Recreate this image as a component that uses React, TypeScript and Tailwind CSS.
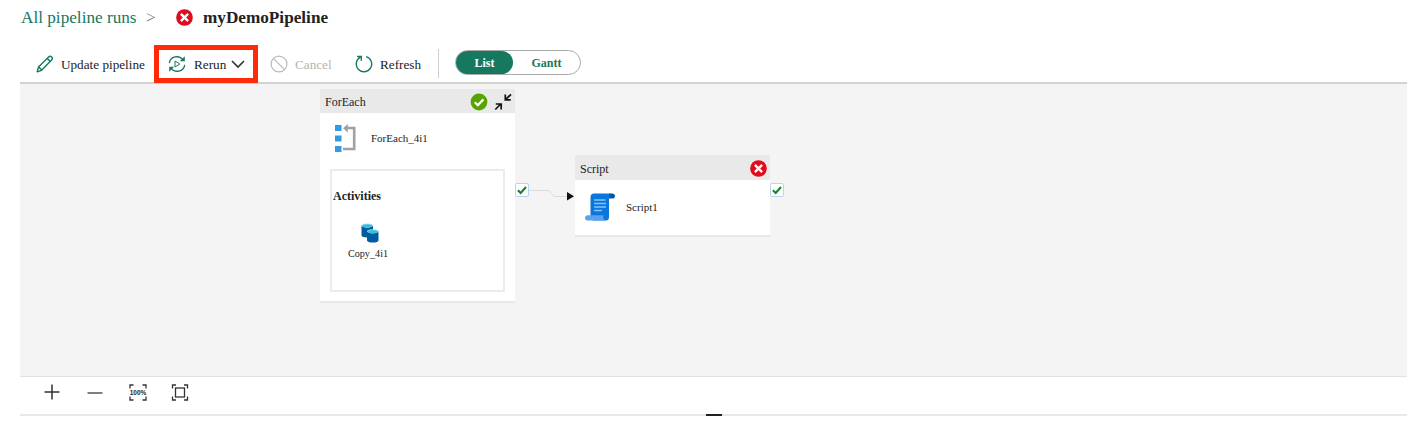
import React from "react";

function ErrorBadge({ className }: { className: string }) {
  return (
    <svg viewBox="0 0 18 18" className={className}>
      <circle cx="9" cy="9" r="8.8" fill="#e00b1c" />
      <path d="M5.2 5.2l7.6 7.6M12.8 5.2l-7.6 7.6" stroke="#fff" strokeWidth="2.5" />
    </svg>
  );
}

function SuccessBadge() {
  return (
    <svg viewBox="0 0 18 18" className="h-[18px] w-[18px] shrink-0">
      <circle cx="9" cy="9" r="8.4" fill="#57a300" />
      <path d="M4.8 9.2l3 3 5.6-5.8" fill="none" stroke="#fff" strokeWidth="2.3" />
    </svg>
  );
}

function PencilIcon() {
  return (
    <svg viewBox="0 0 18 18" className="h-[18px] w-[18px] shrink-0" fill="none" stroke="#16785f" strokeWidth="1.4" strokeLinejoin="round">
      <path d="M1.2 16.8l1.3-4.700L12.600 2c1-1 2.200-1 3.100-.1.9.9.9 2.100-.1 3.100L5.600 15.300z" />
      <path d="M11.300 3.500l3 3M2.700 12l3 3" />
    </svg>
  );
}

function RerunIcon() {
  return (
    <svg viewBox="0 0 18 18" className="h-[18px] w-[18px] shrink-0" fill="none" stroke="#16785f" strokeWidth="1.3">
      <path d="M1.3 8.2A7.5 7.500 0 0 1 15 5.200M16.700 9.800A7.500 7.500 0 0 1 3 12.800" />
      <path d="M16.800 1.200v5h-5zM1.200 16.800v-5h5z" fill="#16785f" stroke="none" />
      <path d="M7 6v6l4.800-3z" strokeWidth="1" />
    </svg>
  );
}

function CancelIcon() {
  return (
    <svg viewBox="0 0 18 18" className="h-[18px] w-[18px] shrink-0" fill="none" stroke="#bcbcbc" strokeWidth="1.3">
      <circle cx="9" cy="9" r="7.900" />
      <path d="M3.400 3.400l11.200 11.200" />
    </svg>
  );
}

function RefreshIcon() {
  return (
    <svg viewBox="0 0 18 18" className="h-[18px] w-[18px] shrink-0" fill="none" stroke="#16785f" strokeWidth="1.4">
      <path d="M11.200 1.700A7.700 7.700 0 1 1 5.500 2.200" />
      <path d="M2 1.500h4.300v4.300" />
    </svg>
  );
}

function CollapseIcon() {
  return (
    <svg viewBox="0 0 18 18" className="h-[18px] w-[18px] shrink-0" fill="none" stroke="#111" strokeWidth="1.700">
      <path d="M17 1.300L12 6.200M11.300 1.500v5.400h5.400M1.300 16.500l5-5M1.800 11h5.400v5.400" />
    </svg>
  );
}

function LoopIcon() {
  return (
    <svg viewBox="0 0 21 29" className="h-[29px] w-[21px] shrink-0">
      <path d="M0 1h6.500v6H0zM0 11.500h6.500v6H0zM0 22h6.500v6H0z" fill="#3399e5" />
      <path d="M12 4h7.200v21H8" fill="none" stroke="#a0a0a0" strokeWidth="2.600" />
      <path d="M8 4.200L12.800 0v8.400z" fill="#a0a0a0" />
    </svg>
  );
}

function CopyIcon() {
  return (
    <svg viewBox="0 0 18 20" className="h-5 w-[18px]">
      <path d="M.5 2.500v10c0 1 2.500 2 6 2s5.500-1 5.500-2v-10z" fill="#005ba1" />
      <ellipse cx="6.250" cy="2.600" rx="5.750" ry="2.100" fill="#b5dcec" />
      <ellipse cx="6.250" cy="2.700" rx="4.800" ry="1.500" fill="#32bedd" />
      <path d="M6 8.300v9.200c0 1.200 2.500 2.100 5.800 2.100s5.700-.9 5.700-2.100V8.300z" fill="#005ba1" />
      <ellipse cx="11.750" cy="8.300" rx="5.750" ry="2.100" fill="#b5dcec" />
      <ellipse cx="11.750" cy="8.400" rx="4.800" ry="1.500" fill="#32bedd" />
    </svg>
  );
}

function ScriptIcon() {
  return (
    <svg viewBox="0 0 30 28" className="h-7 w-[30px] shrink-0">
      <path d="M24 .4h3.300c1.500 0 2.700 1.100 2.700 2.600 0 1.400-1 2.600-2.400 2.600H24z" fill="#0058a3" />
      <path d="M9 .4h17c-1.500.6-2 1.700-2 3.300V24c0 2.300-1.100 3.600-3 3.600H8L5.500 23V4c0-2.200 1.300-3.600 3.500-3.600z" fill="#0a75da" />
      <path d="M2.800 22.200h15.700c-.8 3 .3 4.800 2 5.400H2.800C1.200 27.600 0 26.500 0 25s1.200-2.800 2.800-2.800z" fill="#5e9ff0" />
      <path d="M9.500 7h10.500M9.500 10.500h11M9.500 14h11M9.500 17.500h7" stroke="#83c4fb" strokeWidth="1.300" strokeLinecap="round" />
    </svg>
  );
}

function Port() {
  return (
    <div className="flex h-[14px] w-[14px] shrink-0 items-center justify-center rounded-[2px] border border-[#bad3f1] bg-white">
      <svg viewBox="0 0 10 10" className="h-[10px] w-[10px]">
        <path d="M.9 5.200l2.800 2.700L9 2" fill="none" stroke="#14822a" strokeWidth="2.100" />
      </svg>
    </div>
  );
}

function FitIcon({ percent }: { percent?: boolean }) {
  return (
    <svg viewBox="-2 0 22 17" className="h-[17px] w-[22px] overflow-visible" fill="none" stroke="#333" strokeWidth="1.300">
      {percent ? (
        <>
          <path d="M4.500 1H1v3.500M13.500 1H17v3.500M4.500 16H1v-3.500M13.500 16H17v-3.500" />
          <text x="9" y="11.200" textAnchor="middle" textLength="16.500" lengthAdjust="spacingAndGlyphs" className="fill-[#222] stroke-none font-['Liberation_Sans',sans-serif] text-[8px] font-bold">100%</text>
        </>
      ) : (
        <>
          <path d="M5 1H1.500v3.500M13 1h3.500v3.500M5 16H1.500v-3.500M13 16h3.500v-3.500" />
          <rect x="4.500" y="4" width="9" height="9" />
        </>
      )}
    </svg>
  );
}

export default function App() {
  return (
    <div className="h-[427px] w-[1428px] overflow-hidden bg-white font-['Liberation_Serif',serif] whitespace-nowrap text-[#222]">
      <header className="flex h-[35px] items-center pl-[21px] text-[17.200px]">
        <a className="w-[125px] text-[#16785f]">All pipeline runs</a>
        <span className="w-[30px] text-[#777]">&gt;</span>
        <ErrorBadge className="h-[17px] w-[17px] shrink-0" />
        <h1 className="ml-[10px] font-bold">myDemoPipeline</h1>
      </header>
      <nav className="flex h-[47px] items-start pl-[36px] text-[13.200px]">
        <div className="mt-[10px] flex h-[38px] w-[118px] items-center">
          <PencilIcon />
          <span className="ml-[7px] pt-[2px]">Update pipeline</span>
        </div>
        <div className="relative z-10 mt-[10px] flex h-[38px] w-[104px] shrink-0 items-center border-[5px] border-[#fe2a0a] pl-[9px]">
          <RerunIcon />
          <span className="ml-[8px] w-[37px] pt-[2px]">Rerun</span>
          <svg viewBox="0 0 14 9" className="h-[9px] w-[14px]" fill="none" stroke="#333" strokeWidth="1.600"><path d="M1 1l6 6 6-6" /></svg>
        </div>
        <div className="mt-[10px] ml-[12px] flex h-[38px] w-[85px] items-center text-[#b3b3b3]">
          <CancelIcon />
          <span className="ml-[7px] pt-[2px]">Cancel</span>
        </div>
        <div className="mt-[10px] flex h-[38px] w-[83px] items-center">
          <RefreshIcon />
          <span className="ml-[7px] pt-[2px]">Refresh</span>
        </div>
        <div className="mt-[14px] h-[29px] w-px bg-[#cfcfcf]" />
        <div className="mt-[15px] ml-[16px] flex h-[25px] w-[126px] rounded-full border border-[#aaa] text-[12px] font-bold">
          <div className="flex w-[57px] items-center justify-center rounded-full bg-[#16785f] text-white">List</div>
          <div className="flex w-[67px] items-center justify-center text-[#16785f]">Gantt</div>
        </div>
      </nav>
      <main className="mx-[20px] flex h-[295px] w-[1387px] items-start border-t-2 border-b border-t-[#d2d2d2] border-b-[#e2e2e2] bg-[#f4f4f4] pl-[300px] text-[12px]">
        <section className="mt-[5px] h-[214px] w-[195px] shrink-0 border-b-2 border-[#e7e7e7] bg-white">
          <div className="flex h-[24px] items-center bg-[#e9e9e9] pt-px pl-[5px]">
            <span className="w-[145px]">ForEach</span>
            <SuccessBadge />
            <div className="ml-[6px]"><CollapseIcon /></div>
          </div>
          <div className="flex h-[56px] items-start pt-[11px] pl-[15px]">
            <LoopIcon />
            <span className="mt-[5px] ml-[15px] text-[11px] leading-[18px]">ForEach_4i1</span>
          </div>
          <div className="ml-[10px] h-[123px] w-[175px] border-2 border-[#ebebeb] pt-[16px] pl-[1px]">
            <div className="font-bold">Activities</div>
            <div className="mt-[18px] ml-[9px] flex w-[52px] flex-col items-center">
              <div className="pl-[3px]"><CopyIcon /></div>
              <span className="mt-[3px] text-[10.200px] leading-[16px]">Copy_4i1</span>
            </div>
          </div>
        </section>
        <div className="mt-[99px]"><Port /></div>
        <svg viewBox="0 0 46 20" className="mt-[99px] h-[20px] w-[46px] shrink-0">
          <path d="M0 7.500h18c5 0 4 6 9 6h12" fill="none" stroke="#dadada" />
          <path d="M38 9v8.500l7-4.200z" fill="#111" />
        </svg>
        <section className="mt-[71px] h-[82px] w-[195px] shrink-0 border-b-2 border-[#e7e7e7] bg-white">
          <div className="flex h-[25px] items-center bg-[#e9e9e9] pt-[2px] pl-[5px]">
            <span className="w-[170px]">Script</span>
            <ErrorBadge className="h-[17px] w-[17px] shrink-0" />
          </div>
          <div className="flex items-center pt-[13px] pl-[10px]">
            <ScriptIcon />
            <span className="ml-[11px] text-[11px]">Script1</span>
          </div>
        </section>
        <div className="mt-[99px]"><Port /></div>
      </main>
      <footer className="mx-[20px] flex h-[39px] w-[1387px] items-start border-b-2 border-[#e8e8e8] pt-[7px] pl-[24px]">
        <svg viewBox="0 0 16 16" className="h-[16px] w-[16px]" stroke="#333" strokeWidth="1.500"><path d="M8 .5v15M.5 8h15" /></svg>
        <svg viewBox="0 0 16 16" className="ml-[27px] h-[16px] w-[16px]" stroke="#555" strokeWidth="1.500"><path d="M.5 9h15" /></svg>
        <div className="ml-[24px]"><FitIcon percent /></div>
        <div className="ml-[20px]"><FitIcon /></div>
      </footer>
      <div className="relative -top-[2px] ml-[706px] h-[2px] w-[16px] bg-[#222]" />
    </div>
  );
}
